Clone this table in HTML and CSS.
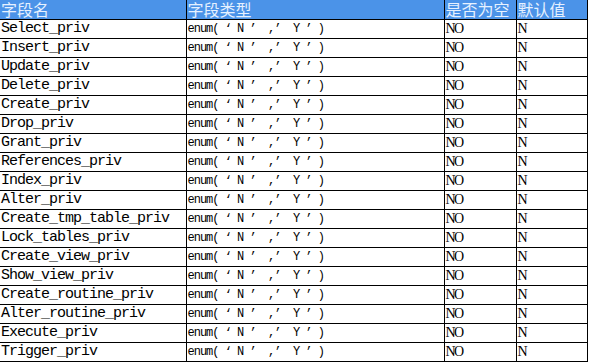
FILE: index.html
```html
<!DOCTYPE html>
<html>
<head>
<meta charset="utf-8">
<link rel="stylesheet" href="styles.css">
</head>
<body>
<table class="grid">
<colgroup><col class="c1"><col class="c2"><col class="c3"><col class="c4"></colgroup>
<thead>
<tr class="head"><th>字段名</th><th>字段类型</th><th>是否为空</th><th>默认值</th></tr>
</thead>
<tbody>
<tr><td class="name">Select_priv</td><td class="type">enum( ‘ N ’  ,’  Y ’ )</td><td class="nul">NO</td><td class="def">N</td></tr>
<tr><td class="name">Insert_priv</td><td class="type">enum( ‘ N ’  ,’  Y ’ )</td><td class="nul">NO</td><td class="def">N</td></tr>
<tr><td class="name">Update_priv</td><td class="type">enum( ‘ N ’  ,’  Y ’ )</td><td class="nul">NO</td><td class="def">N</td></tr>
<tr><td class="name">Delete_priv</td><td class="type">enum( ‘ N ’  ,’  Y ’ )</td><td class="nul">NO</td><td class="def">N</td></tr>
<tr><td class="name">Create_priv</td><td class="type">enum( ‘ N ’  ,’  Y ’ )</td><td class="nul">NO</td><td class="def">N</td></tr>
<tr><td class="name">Drop_priv</td><td class="type">enum( ‘ N ’  ,’  Y ’ )</td><td class="nul">NO</td><td class="def">N</td></tr>
<tr><td class="name">Grant_priv</td><td class="type">enum( ‘ N ’  ,’  Y ’ )</td><td class="nul">NO</td><td class="def">N</td></tr>
<tr><td class="name">References_priv</td><td class="type">enum( ‘ N ’  ,’  Y ’ )</td><td class="nul">NO</td><td class="def">N</td></tr>
<tr><td class="name">Index_priv</td><td class="type">enum( ‘ N ’  ,’  Y ’ )</td><td class="nul">NO</td><td class="def">N</td></tr>
<tr><td class="name">Alter_priv</td><td class="type">enum( ‘ N ’  ,’  Y ’ )</td><td class="nul">NO</td><td class="def">N</td></tr>
<tr><td class="name">Create_tmp_table_priv</td><td class="type">enum( ‘ N ’  ,’  Y ’ )</td><td class="nul">NO</td><td class="def">N</td></tr>
<tr><td class="name">Lock_tables_priv</td><td class="type">enum( ‘ N ’  ,’  Y ’ )</td><td class="nul">NO</td><td class="def">N</td></tr>
<tr><td class="name">Create_view_priv</td><td class="type">enum( ‘ N ’  ,’  Y ’ )</td><td class="nul">NO</td><td class="def">N</td></tr>
<tr><td class="name">Show_view_priv</td><td class="type">enum( ‘ N ’  ,’  Y ’ )</td><td class="nul">NO</td><td class="def">N</td></tr>
<tr><td class="name">Create_routine_priv</td><td class="type">enum( ‘ N ’  ,’  Y ’ )</td><td class="nul">NO</td><td class="def">N</td></tr>
<tr><td class="name">Alter_routine_priv</td><td class="type">enum( ‘ N ’  ,’  Y ’ )</td><td class="nul">NO</td><td class="def">N</td></tr>
<tr><td class="name">Execute_priv</td><td class="type">enum( ‘ N ’  ,’  Y ’ )</td><td class="nul">NO</td><td class="def">N</td></tr>
<tr><td class="name">Trigger_priv</td><td class="type">enum( ‘ N ’  ,’  Y ’ )</td><td class="nul">NO</td><td class="def">N</td></tr>
</tbody>
</table>
</body>
</html>
```
FILE: styles.css
```css
html, body {
  margin: 0;
  padding: 0;
  background: #ffffff;
}
.grid {
  border-collapse: collapse;
  table-layout: fixed;
  width: 587px;
}
.c1 { width: 186px; }
.c2 { width: 258px; }
.c3 { width: 72px; }
.c4 { width: 71px; }
.grid th, .grid td {
  border-right: 1px solid #000;
  border-bottom: 1px solid #000;
  padding: 0 0 0 1px;
  white-space: pre;
  text-align: left;
  vertical-align: middle;
}
.grid th {
  height: 19px;
  background: #4b93e8;
  color: #e6f1ff;
  font-family: "Noto Sans CJK SC", sans-serif;
  font-weight: normal;
  font-size: 16px;
  line-height: 19px;
  overflow: visible;
}
.grid td {
  height: 18px;
  line-height: 18px;
  color: #000;
  overflow: hidden;
}
.name {
  font-family: "Liberation Mono", monospace;
  font-size: 15px;
  letter-spacing: -1px;
}
.type {
  font-family: "Liberation Mono", monospace;
  font-size: 12px;
  letter-spacing: -1px;
}
.nul, .def {
  font-family: "Liberation Serif", serif;
  font-size: 14px;
  letter-spacing: -1.5px;
}
```
